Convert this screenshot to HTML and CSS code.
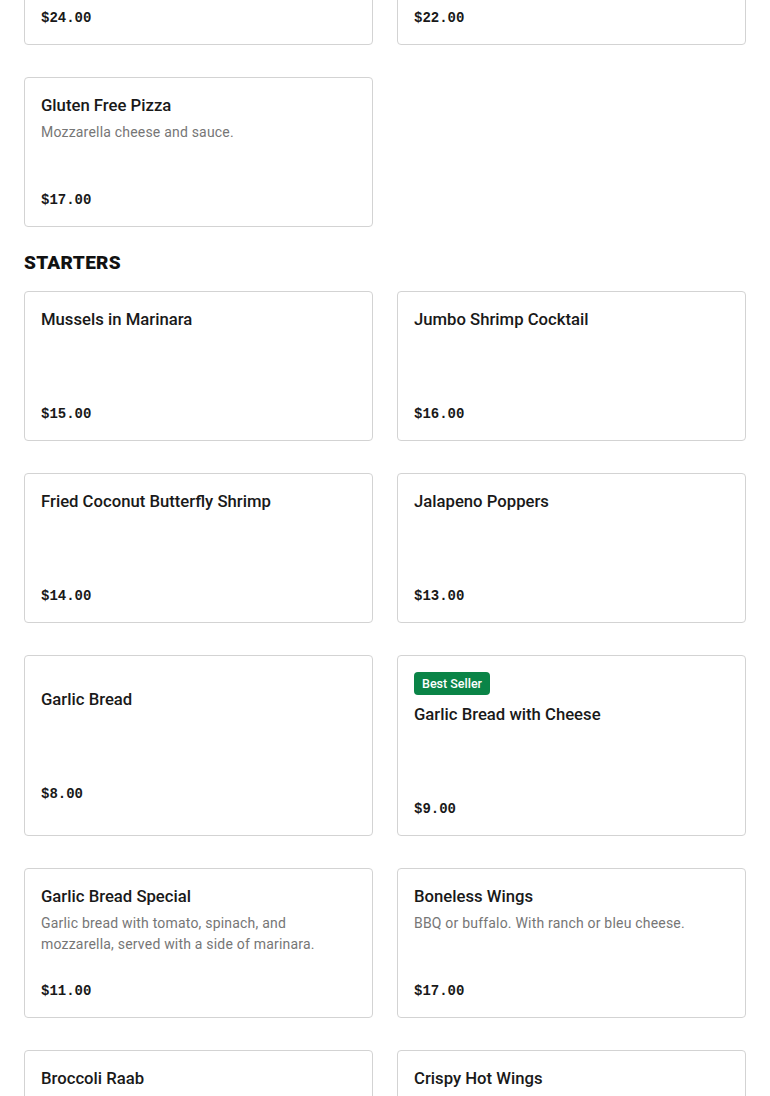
FILE: index.html
```html
<!DOCTYPE html>
<html lang="en">
<head>
<meta charset="utf-8">
<title>Menu</title>
<link rel="stylesheet" href="styles.css">
</head>
<body>
<main class="menu">
  <section class="section section-scrolled">
    <div class="grid">
      <article class="card"><div class="card-body"><div class="card-main"><h3 class="title">Sicilian Pizza</h3><p class="price">$24.00</p></div></div></article>
      <article class="card"><div class="card-body"><div class="card-main"><h3 class="title">White Pizza</h3><p class="price">$22.00</p></div></div></article>
      <article class="card"><div class="card-body"><div class="card-main"><h3 class="title">Gluten Free Pizza</h3><p class="desc">Mozzarella cheese and sauce.</p><p class="price">$17.00</p></div></div></article>
    </div>
  </section>
  <section class="section">
    <h2 class="section-title">STARTERS</h2>
    <div class="grid">
      <article class="card"><div class="card-body"><div class="card-main"><h3 class="title">Mussels in Marinara</h3><p class="price">$15.00</p></div></div></article>
      <article class="card"><div class="card-body"><div class="card-main"><h3 class="title">Jumbo Shrimp Cocktail</h3><p class="price">$16.00</p></div></div></article>
      <article class="card"><div class="card-body"><div class="card-main"><h3 class="title">Fried Coconut Butterfly Shrimp</h3><p class="price">$14.00</p></div></div></article>
      <article class="card"><div class="card-body"><div class="card-main"><h3 class="title">Jalapeno Poppers</h3><p class="price">$13.00</p></div></div></article>
      <article class="card"><div class="card-body"><div class="card-main"><h3 class="title">Garlic Bread</h3><p class="price">$8.00</p></div></div></article>
      <article class="card"><div class="card-body"><span class="badge">Best Seller</span><div class="card-main"><h3 class="title">Garlic Bread with Cheese</h3><p class="price">$9.00</p></div></div></article>
      <article class="card"><div class="card-body"><div class="card-main"><h3 class="title">Garlic Bread Special</h3><p class="desc">Garlic bread with tomato, spinach, and mozzarella, served with a side of marinara.</p><p class="price">$11.00</p></div></div></article>
      <article class="card"><div class="card-body"><div class="card-main"><h3 class="title">Boneless Wings</h3><p class="desc">BBQ or buffalo. With ranch or bleu cheese.</p><p class="price">$17.00</p></div></div></article>
      <article class="card"><div class="card-body"><div class="card-main"><h3 class="title">Broccoli Raab</h3><p class="price">$12.00</p></div></div></article>
      <article class="card"><div class="card-body"><div class="card-main"><h3 class="title">Crispy Hot Wings</h3><p class="price">$17.00</p></div></div></article>
    </div>
  </section>
</main>
</body>
</html>
```

FILE: styles.css
```css
* { box-sizing: border-box; }

html, body {
  margin: 0;
  padding: 0;
  background: #ffffff;
}

body {
  font-family: Roboto, "Noto Sans", Inter, sans-serif;
  color: #191919;
  overflow: hidden;
}

.menu {
  padding: 0 24px;
  margin-top: -105px;
}

.section-title {
  margin: 24px 0 16px;
  font-size: 19px;
  line-height: 24px;
  font-weight: 900;
  letter-spacing: 0.3px;
  color: #111;
}

.grid {
  display: grid;
  grid-template-columns: 1fr 1fr;
  column-gap: 24px;
  row-gap: 32px;
}

.card {
  border: 1px solid #d3d3d3;
  border-radius: 4px;
  padding: 16px;
  min-height: 150px;
  display: flex;
  flex-direction: column;
  justify-content: center;
}

.card-body {
  display: flex;
  flex-direction: column;
  align-items: flex-start;
}

.card-main {
  display: flex;
  flex-direction: column;
  align-items: flex-start;
  min-height: 116px;
  width: 100%;
}

.badge {
  background: #0a8447;
  color: #ffffff;
  font-size: 12.5px;
  font-weight: 500;
  line-height: 23px;
  height: 23px;
  padding: 0 8px;
  border-radius: 4px;
  margin-bottom: 8px;
}

.title {
  margin: 0;
  font-size: 16.7px;
  line-height: 24px;
  font-weight: 500;
  color: #191919;
}

.desc {
  margin: 4px 0 0;
  font-size: 14px;
  line-height: 21px;
  letter-spacing: 0.2px;
  color: #767676;
  max-width: 300px;
}

.price {
  margin: auto 0 0;
  padding-top: 16px;
  font-family: "Liberation Mono", "DejaVu Sans Mono", monospace;
  font-size: 14px;
  line-height: 20px;
  font-weight: 700;
  color: #191919;
}
```
